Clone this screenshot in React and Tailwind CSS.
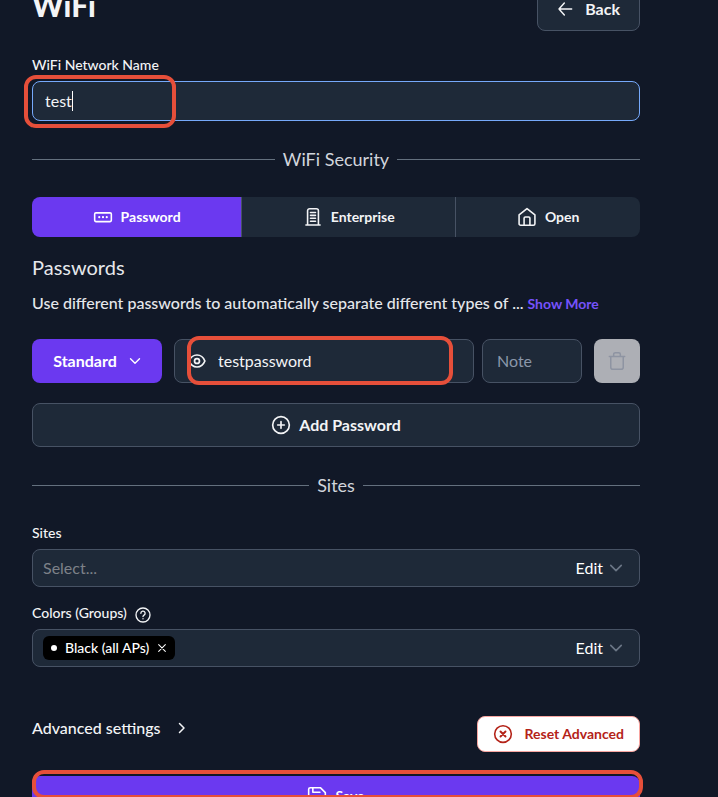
import React from 'react';

const Icon = ({ className, children, strokeWidth = 1.5 }) => (
  <svg
    viewBox="0 0 24 24"
    fill="none"
    stroke="currentColor"
    strokeWidth={strokeWidth}
    strokeLinecap="round"
    strokeLinejoin="round"
    aria-hidden="true"
    className={`shrink-0 ${className}`}
  >
    {children}
  </svg>
);

const ArrowLeftIcon = ({ className }) => (
  <Icon className={className} strokeWidth={2.2}>
    <path d="M22 12H3M11 3l-8 9 8 9" />
  </Icon>
);

const PasswordIcon = ({ className }) => (
  <Icon className={className} strokeWidth={1.9}>
    <rect x="2" y="7" width="20" height="10.5" rx="1.5" />
    <path d="M7.5 12.2h.01M12 12.2h.01M16.5 12.2h.01" strokeWidth={2.6} />
  </Icon>
);

const BuildingIcon = ({ className }) => (
  <Icon className={className} strokeWidth={1.9}>
    <path d="M3.5 21.5h17M5.5 21.5v-17A2.5 2.5 0 0 1 8 2h8a2.5 2.5 0 0 1 2.500 2.500v17" />
    <path d="M9 6.500h6M9 10h6M9 13.500h6M9 17h6" />
  </Icon>
);

const HomeIcon = ({ className }) => (
  <Icon className={className} strokeWidth={1.9}>
    <path d="M2.500 9.500 12 2l9.500 7.500V20a1.800 1.800 0 0 1-1.800 1.800H4.300A1.800 1.800 0 0 1 2.500 20z" />
    <path d="M8.500 21.500v-8A1.500 1.500 0 0 1 10 12h4a1.500 1.500 0 0 1 1.500 1.500v8" />
  </Icon>
);

const EyeIcon = ({ className }) => (
  <Icon className={className} strokeWidth={2.3}>
    <path d="M1.500 12C3.500 7 7.300 4 12 4s8.500 3 10.500 8c-2 5-5.800 8-10.500 8S3.500 17 1.500 12z" />
    <circle cx="12" cy="12" r="3.300" />
  </Icon>
);

const TrashIcon = ({ className }) => (
  <Icon className={className} strokeWidth={1.8}>
    <path d="M2.800 6.500h18.400M8 6.500V4a2 2 0 0 1 2-2h4a2 2 0 0 1 2 2v2.500M4.500 6.500v13a2.500 2.500 0 0 0 2.500 2.500h10a2.500 2.500 0 0 0 2.500-2.500v-13" />
  </Icon>
);

const PlusCircleIcon = ({ className }) => (
  <Icon className={className} strokeWidth={2}>
    <circle cx="12" cy="12" r="10" />
    <path d="M12 8v8M8 12h8" />
  </Icon>
);

const CloseCircleIcon = ({ className }) => (
  <Icon className={className} strokeWidth={1.9}>
    <circle cx="12" cy="12" r="10" />
    <path d="m9 9 6 6M15 9l-6 6" strokeWidth={2.3} />
  </Icon>
);

const HelpIcon = ({ className }) => (
  <Icon className={className} strokeWidth={2}>
    <circle cx="12" cy="12" r="10.500" />
    <path d="M8.800 9.500a3.200 3.200 0 1 1 4.800 2.700c-1 .6-1.600 1-1.600 2M12 17.600h.01" />
  </Icon>
);

const SaveIcon = ({ className }) => (
  <Icon className={className} strokeWidth={1.9}>
    <path d="M2 4a2 2 0 0 1 2-2h12l6 6v12a2 2 0 0 1-2 2H4a2 2 0 0 1-2-2z" />
    <path d="M7 2v5.500h8.500M6 22v-8h12v8" />
  </Icon>
);

const CloseIcon = ({ className }) => (
  <Icon className={className} strokeWidth={2.5}>
    <path d="m4 4 16 16M20 4 4 20" />
  </Icon>
);

const ChevronDownIcon = ({ className }) => (
  <Icon className={className} strokeWidth={2.8}>
    <path d="m3 7.500 9 9 9-9" />
  </Icon>
);

const ChevronRightIcon = ({ className }) => (
  <Icon className={className} strokeWidth={3}>
    <path d="m7 3 9 9-9 9" />
  </Icon>
);

const securityTabs = [
  { label: 'Password', icon: PasswordIcon, active: true },
  { label: 'Enterprise', icon: BuildingIcon, active: false },
  { label: 'Open', icon: HomeIcon, active: false },
];

function Divider({ children }) {
  return (
    <div className="flex items-center gap-2">
      <div className="h-px flex-1 bg-[#64707e]" />
      <h2 className="text-lg leading-7 text-gray-300">{children}</h2>
      <div className="h-px flex-1 bg-[#64707e]" />
    </div>
  );
}

// Red frame that points the reader at a field
function Highlight({ className }) {
  return (
    <div className={`pointer-events-none absolute rounded-xl border-4 border-[#e64f3a] ${className}`} />
  );
}

function SelectBox({ id, placeholder, chip }) {
  return (
    <div className="flex h-[38px] items-center rounded-lg border border-[#475264] bg-[#1e2938] pr-4 pl-[10px]">
      {chip}
      <select id={id} className="h-full min-w-0 flex-1 appearance-none bg-transparent text-base text-[#7d8188] outline-none">
        <option>{placeholder}</option>
      </select>
      <span className="mr-[6px] text-base text-white">Edit</span>
      <ChevronDownIcon className="size-[14px] text-[#6b7686]" />
    </div>
  );
}

export default function App() {
  return (
    <div className="h-screen overflow-hidden bg-[#111827] font-[Lato,sans-serif] text-gray-100">
      <main className="-mt-[13px] max-w-[672px] px-8">
        <header className="flex h-11 items-start justify-between">
          <h1 className="text-3xl leading-9 font-black">WiFi</h1>
          <button
            type="button"
            className="flex h-11 items-center gap-3 rounded-lg border border-[#475264] bg-[#1e2938] px-[19px] text-base font-bold"
          >
            <ArrowLeftIcon className="size-4" />
            Back
          </button>
        </header>

        <div className="mt-6">
          <label htmlFor="ssid" className="block text-sm leading-5 font-medium">
            WiFi Network Name
          </label>
          <div className="relative mt-[6px]">
            <div className="flex h-10 items-center rounded-lg border border-[#76a9fa] bg-[#1e2938] px-3">
              <input id="ssid" defaultValue="test" className="field-sizing-content bg-transparent text-base outline-none" />
              <span className="h-5 w-px bg-white" />
            </div>
            <Highlight className="-top-[6px] -left-2 h-[53px] w-[152px]" />
          </div>
        </div>

        <div className="mt-6">
          <Divider>WiFi Security</Divider>
        </div>

        <div className="mt-6 flex h-10 overflow-hidden rounded-lg">
          {securityTabs.map((tab) => {
            const TabIcon = tab.icon;
            return (
              <button
                key={tab.label}
                type="button"
                aria-pressed={tab.active}
                className={`flex flex-auto items-center justify-center gap-2 border-l text-sm font-bold first:border-l-0 ${
                  tab.active ? 'border-transparent bg-[#6b39f0] text-white' : 'border-[#475264] bg-[#1e2938]'
                }`}
              >
                <TabIcon className="size-5" />
                {tab.label}
              </button>
            );
          })}
        </div>

        <h3 className="mt-4 text-xl leading-7 text-gray-200">Passwords</h3>
        <p className="mt-[10px] text-base leading-6 font-medium text-gray-200">
          Use different passwords to automatically separate different types of ...{' '}
          <button type="button" className="text-sm font-bold text-[#7652fb]">
            Show More
          </button>
        </p>

        <div className="mt-6 flex h-11 items-stretch">
          <button
            type="button"
            className="flex w-[130px] items-center justify-center gap-3 rounded-lg bg-[#6b39f0] text-base font-bold text-white"
          >
            Standard
            <ChevronDownIcon className="size-3" />
          </button>
          <div className="relative ml-3 flex-1">
            <div className="flex h-full items-center gap-3 rounded-lg border border-[#475264] bg-[#1e2938] px-[13px]">
              <button type="button" aria-label="Toggle password visibility">
                <EyeIcon className="size-[18px]" />
              </button>
              <input
                aria-label="Password"
                defaultValue="testpassword"
                className="min-w-0 flex-1 bg-transparent text-base outline-none"
              />
            </div>
            <Highlight className="-top-[3px] right-[21px] left-[13px] h-[49px]" />
          </div>
          <input
            aria-label="Note"
            placeholder="Note"
            className="ml-2 w-[100px] rounded-lg border border-[#475264] bg-[#1e2938] px-[14px] text-base outline-none placeholder:text-[#8a97aa]"
          />
          <button
            type="button"
            aria-label="Delete password"
            className="ml-3 flex w-[46px] items-center justify-center rounded-lg bg-[#adafb5] text-[#8e94a2]"
          >
            <TrashIcon className="size-5" />
          </button>
        </div>

        <button
          type="button"
          className="mt-5 flex h-11 w-full items-center justify-center gap-2 rounded-lg border border-[#475264] bg-[#1e2938] text-base font-bold"
        >
          <PlusCircleIcon className="size-5" />
          Add Password
        </button>

        <div className="mt-6">
          <Divider>Sites</Divider>
        </div>

        <div className="mt-6">
          <label htmlFor="sites" className="mb-[6px] block text-sm leading-5 font-medium">
            Sites
          </label>
          <SelectBox id="sites" placeholder="Select..." />
        </div>

        <div className="mt-4">
          <label htmlFor="colors" className="mb-[6px] flex items-end gap-2 text-sm leading-5 font-medium">
            Colors (Groups)
            <HelpIcon className="size-4" />
          </label>
          <SelectBox
            id="colors"
            placeholder=""
            chip={
              <span className="flex h-6 items-center gap-2 rounded-md bg-black px-2 text-sm font-medium text-white">
                <span className="size-[6px] rounded-full bg-white" />
                Black (all APs)
                <button type="button" aria-label="Remove Black (all APs)">
                  <CloseIcon className="size-[10px]" />
                </button>
              </span>
            }
          />
        </div>

        <div className="mt-[49px] flex items-start justify-between">
          <button type="button" className="flex items-center gap-4 text-base leading-6 font-medium">
            Advanced settings
            <ChevronRightIcon className="size-3" />
          </button>
          <button
            type="button"
            className="flex h-9 items-center gap-3 rounded-lg border border-[#f8a5a0] bg-white px-[15px] text-sm font-bold text-[#b42318]"
          >
            <CloseCircleIcon className="size-5" />
            Reset Advanced
          </button>
        </div>

        <div className="relative mt-6">
          <button
            type="button"
            className="flex h-10 w-full items-center justify-center gap-2 rounded-lg bg-[#6b39f0] text-sm font-bold text-white"
          >
            <SaveIcon className="size-5" />
            Save
          </button>
          <Highlight className="-top-[6px] -right-[3px] left-0 h-[29px]" />
        </div>
      </main>
    </div>
  );
}
